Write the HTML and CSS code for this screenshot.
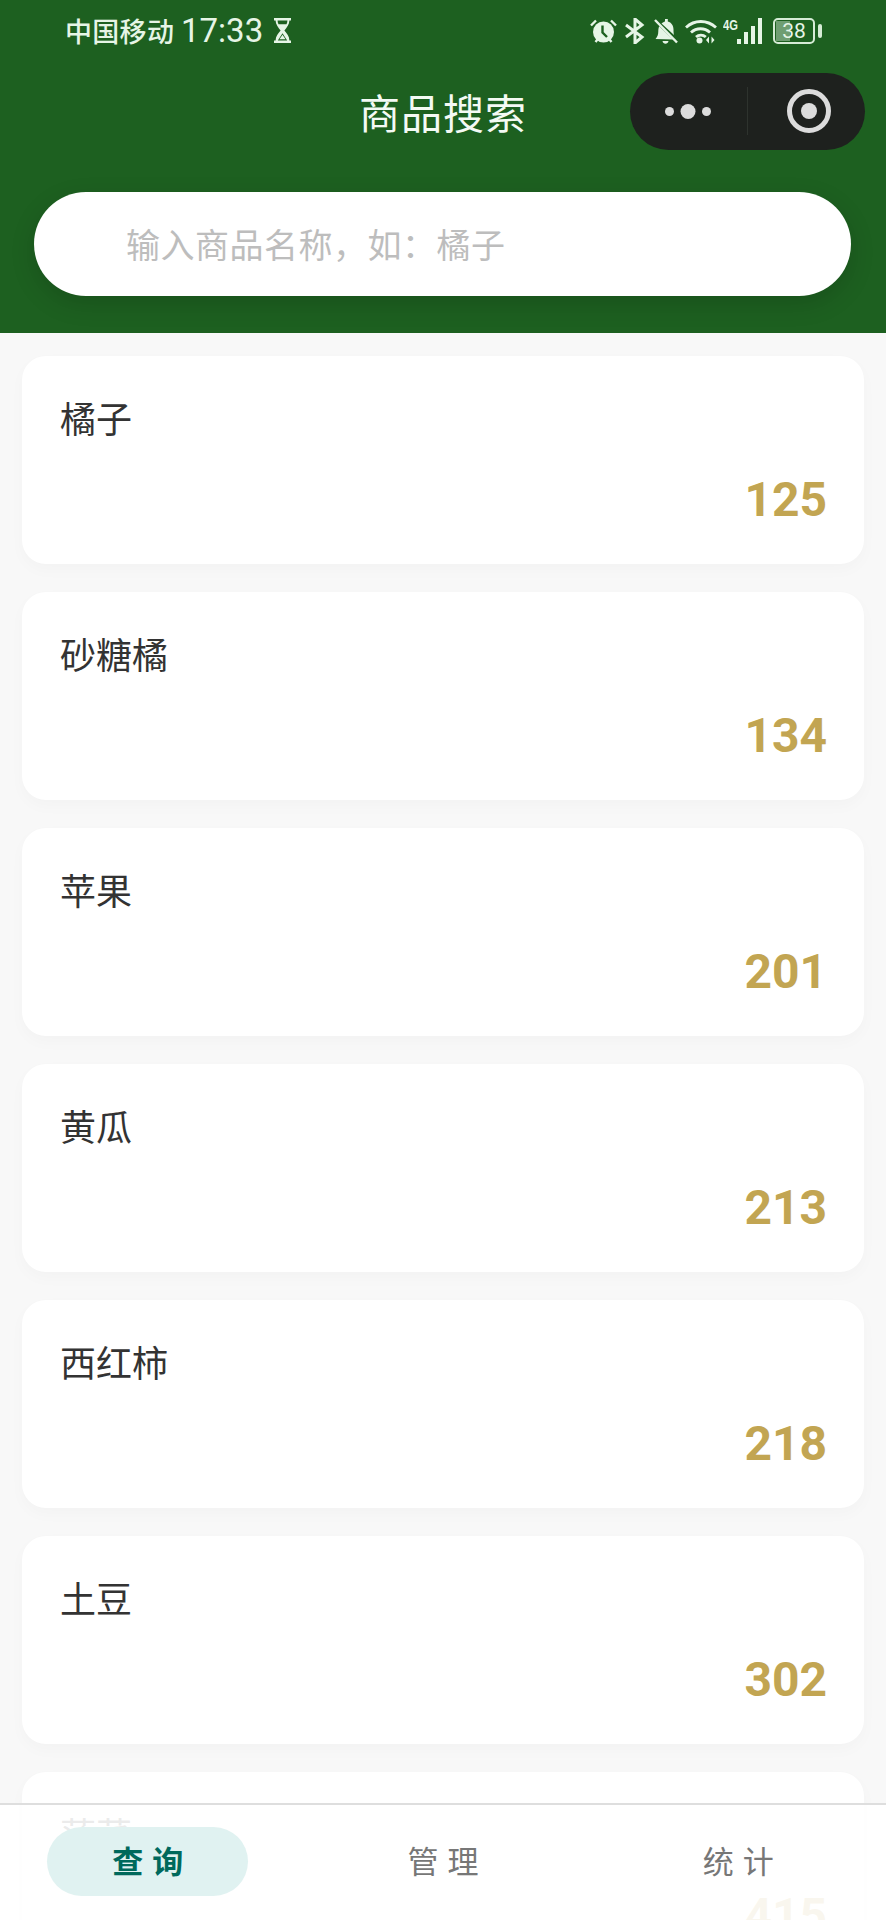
FILE: index.html
```html
<!DOCTYPE html>
<html lang="zh-CN">
<head>
<meta charset="utf-8">
<title>商品搜索</title>
<link rel="stylesheet" href="styles.css">
</head>
<body>
<div class="page">
  <header class="header">
    <div class="status">
      <div class="status-left">
        <span class="carrier">中国移动</span>
        <span class="clock">17:33</span>
        <svg class="ic-hourglass" viewBox="0 0 19 25"><path d="M1 0h17v2.600h-1.600c0 4-2.600 7-5 9.900 2.400 2.900 5 5.900 5 9.900H18V25H1v-2.600h1.600c0-4 2.600-7 5-9.900-2.400-2.900-5-5.900-5-9.900H1z" fill="#e6f5e6"/><path d="M4.600 2.600h9.800c0 1.300-.3 2.500-.9 3.700H5.500c-.6-1.200-.9-2.400-.9-3.700zM9.500 15.200l-4.700 7.200h9.400z" fill="#1d6020"/><path d="M9.500 16.800l3 4.400h-6z" fill="#e6f5e6"/></svg>
      </div>
      <div class="status-right">
        <svg class="ic-alarm" viewBox="0 0 27 26"><circle cx="13.500" cy="14" r="10.500" fill="#e6f5e6"/><path d="M1 7.500L6 2.500M26 7.500L21 2.500M5.500 24l2-2.500M21.500 24l-2-2.500" stroke="#e6f5e6" stroke-width="2.400" fill="none"/><path d="M12.500 7.500v7l4.500 4.500" stroke="#1d6020" stroke-width="2.400" fill="none"/></svg>
        <svg class="ic-bt" viewBox="0 0 20 26"><path d="M1 7L17 19 10 25V1l7 6L1 19" stroke="#e6f5e6" stroke-width="3" fill="none"/></svg>
        <svg class="ic-bell" viewBox="0 0 25 26"><path d="M2.500 21c2-2.500 2.800-4.500 2.800-8 0-2 .3-3.500 1-4.800L20 21.500zM8.500 5.500C10 4.200 11 3.800 12 3.400V1h2.800v2.400c3.700 1 5.700 4 5.700 8 0 2.500.1 3.800.5 5.500zM9.500 23h6c-.3 1.800-1.500 2.800-3 2.800s-2.700-1-3-2.800z" fill="#e6f5e6"/><path d="M2 2L24 24.500" stroke="#e6f5e6" stroke-width="2.400"/></svg>
        <svg class="ic-wifi" viewBox="0 0 32 26"><path d="M1 9.500C9.500 1.500 22 1.500 31 9.500M6 14.500c5.500-5 13.500-5 19 0M11 19c2.800-2.500 7-2.500 9.800 0" stroke="#e6f5e6" stroke-width="2.800" fill="none"/><circle cx="14.500" cy="22.500" r="3" fill="#e6f5e6"/><path d="M24 18.500v7l-3-3.500zM26.500 18.500v7l3-3.500z" fill="#e6f5e6"/></svg>
        <div class="net">
          <span class="net-label">4G</span>
          <div class="bars"><i class="bar b1"></i><i class="bar b2"></i><i class="bar b3"></i><i class="bar b4"></i></div>
        </div>
        <div class="battery">
          <div class="battery-body"><i class="battery-fill"></i><span class="battery-num">38</span></div>
          <i class="battery-cap"></i>
        </div>
      </div>
    </div>
    <div class="nav">
      <span></span>
      <h1 class="title">商品搜索</h1>
      <div class="capsule">
        <svg class="ic-more" viewBox="0 0 46 15"><circle cx="4.500" cy="7.500" r="4.500" fill="#dcdcdc"/><circle cx="23" cy="7.500" r="7.500" fill="#dcdcdc"/><circle cx="41.500" cy="7.500" r="4.500" fill="#dcdcdc"/></svg>
        <i class="capsule-line"></i>
        <svg class="ic-target" viewBox="0 0 44 44"><circle cx="22" cy="22" r="19.500" fill="none" stroke="#dcdcdc" stroke-width="5"/><circle cx="22" cy="22" r="8" fill="#dcdcdc"/></svg>
      </div>
    </div>
    <div class="search"><span class="placeholder">输入商品名称，如：橘子</span></div>
  </header>

  <main class="list">
    <article class="card"><div class="name">橘子</div><div class="num">125</div></article>
    <article class="card"><div class="name">砂糖橘</div><div class="num">134</div></article>
    <article class="card"><div class="name">苹果</div><div class="num">201</div></article>
    <article class="card"><div class="name">黄瓜</div><div class="num">213</div></article>
    <article class="card"><div class="name">西红柿</div><div class="num">218</div></article>
    <article class="card"><div class="name">土豆</div><div class="num">302</div></article>
    <article class="card"><div class="name">菠菜</div><div class="num">415</div></article>
  </main>

  <nav class="tabbar">
    <div class="tab"><span class="tab-label active">查询</span></div>
    <div class="tab"><span class="tab-label">管理</span></div>
    <div class="tab"><span class="tab-label">统计</span></div>
  </nav>
</div>
</body>
</html>
```
FILE: styles.css
```css
* { box-sizing: border-box; }
html, body { margin: 0; padding: 0; }
body {
  background: #f8f8f8;
  font-family: "Noto Sans CJK SC", "Noto Sans", sans-serif;
}
.page {
  position: relative;
  width: 886px;
  height: 1920px;
  overflow: hidden;
}

/* header */
.header {
  background: #1d6020;
  height: 333px;
  padding-bottom: 37px;
}
.status {
  height: 61px;
  padding: 0 64px 0 65px;
  display: flex;
  justify-content: space-between;
  align-items: center;
  color: #e6f5e6;
}
.status-left { display: flex; align-items: center; }
.carrier { font-size: 27px; font-weight: 500; line-height: 36px; width: 116px; letter-spacing: 0.3px; }
.clock { font-family: Roboto, sans-serif; font-size: 33px; line-height: 36px; width: 92px; }
.ic-hourglass { width: 19px; height: 25px; display: block; }
.status-right { display: flex; align-items: center; }
.ic-alarm { width: 27px; height: 26px; margin-right: 8px; }
.ic-bt { width: 20px; height: 26px; margin-right: 8px; }
.ic-bell { width: 25px; height: 26px; margin-right: 7px; }
.ic-wifi { width: 32px; height: 26px; margin-right: 6px; }
.net { display: flex; align-items: flex-start; height: 26px; margin-right: 11px; }
.net-label {
  font-family: "Liberation Sans", sans-serif;
  font-weight: 700;
  font-size: 14px;
  line-height: 14px;
  width: 14px;
  transform: scaleX(0.8);
  transform-origin: left;
}
.bars { display: flex; align-items: flex-end; gap: 3px; height: 26px; }
.bar { display: block; width: 4px; background: #e6f5e6; }
.b1 { height: 5px; }
.b2 { height: 12px; }
.b3 { height: 18px; }
.b4 { height: 26px; }
.battery { display: flex; align-items: center; }
.battery-body {
  position: relative;
  width: 42px;
  height: 26px;
  border: 2px solid #d6ecd6;
  border-radius: 5px;
  display: flex;
  align-items: center;
  justify-content: center;
  overflow: hidden;
}
.battery-fill {
  position: absolute;
  left: 1px;
  top: 1px;
  bottom: 1px;
  width: 14px;
  background: #6f9e72;
}
.battery-num {
  position: relative;
  font-family: Roboto, sans-serif;
  font-size: 21px;
  line-height: 22px;
  color: #e6f5e6;
}
.battery-cap {
  display: block;
  width: 4px;
  height: 14px;
  margin-left: 3px;
  background: #d6ecd6;
  border-radius: 2px;
}

.nav {
  height: 100px;
  padding: 0 21px;
  display: grid;
  grid-template-columns: 1fr auto 1fr;
  align-items: center;
}
.title {
  margin: 0;
  font-size: 41px;
  font-weight: 400;
  line-height: 56px;
  color: #f4faf4;
  letter-spacing: 1px;
}
.capsule {
  justify-self: end;
  width: 235px;
  height: 77px;
  border-radius: 39px;
  background: #1e211e;
  display: flex;
  align-items: center;
  padding-left: 35px;
}
.ic-more { width: 46px; height: 15px; flex: none; }
.capsule-line { display: block; width: 1px; height: 48px; background: #2e332e; margin-left: 36px; }
.ic-target { width: 44px; height: 44px; flex: none; margin-left: 39px; }

.search {
  margin: 31px 35px 0 34px;
  height: 104px;
  border-radius: 52px;
  background: #fff;
  padding-left: 92px;
  display: flex;
  align-items: center;
  box-shadow: 0 8px 24px rgba(0, 0, 0, 0.15);
}
.placeholder { font-size: 34px; color: #bdbdbd; line-height: 48px; letter-spacing: 0.5px; }

/* list */
.list {
  padding: 23px 22px 0;
  display: flex;
  flex-direction: column;
  gap: 28px;
}
.card {
  flex: none;
  height: 208px;
  border-radius: 24px;
  background: #fff;
  padding: 36px 37px 36px 38px;
  box-shadow: 0 6px 16px rgba(0, 0, 0, 0.025);
}
.name { font-size: 36px; line-height: 50px; color: #333; }
.num {
  margin-top: 30px;
  font-family: Roboto, sans-serif;
  font-weight: 700;
  font-size: 48px;
  line-height: 56px;
  color: #c2a552;
  text-align: right;
}

/* tab bar */
.tabbar {
  position: absolute;
  left: 0;
  right: 0;
  bottom: 0;
  height: 117px;
  border-top: 2px solid #dedede;
  background: rgba(255, 255, 255, 0.9);
  padding-top: 22px;
  display: flex;
  align-items: flex-start;
}
.tab { flex: 1; display: flex; justify-content: center; }
.tab-label {
  width: 201px;
  height: 69px;
  border-radius: 35px;
  padding-left: 9px;
  font-size: 31px;
  letter-spacing: 9px;
  line-height: 66px;
  text-align: center;
  color: #777;
}
.tab-label.active {
  background: #e0f2f1;
  color: #00695c;
  font-weight: 700;
}
```
